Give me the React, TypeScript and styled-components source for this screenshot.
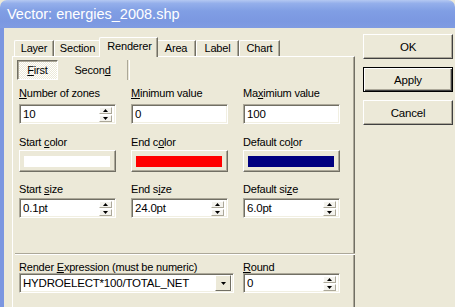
import React from "react";
import styled, { createGlobalStyle } from "styled-components";

const GlobalStyle = createGlobalStyle`
  html, body {
    margin: 0;
    padding: 0;
    width: 455px;
    height: 307px;
    overflow: hidden;
    background: #ece9d8;
  }
  body {
    font-family: "Liberation Sans", Arial, sans-serif;
    font-size: 11px;
    letter-spacing: -0.2px;
    color: #000;
  }
`;

const Window = styled.div`
  width: 455px;
  height: 307px;
  display: flex;
  flex-direction: column;
  overflow: hidden;
`;

const TitleBar = styled.div`
  height: 28px;
  flex: none;
  display: flex;
  align-items: center;
  padding-left: 7px;
  border-radius: 7px 7px 0 0;
  background: linear-gradient(
    180deg,
    #b4c8f2 0%,
    #94afeb 12%,
    #809ee4 40%,
    #7b98e1 75%,
    #7f9be2 100%
  );
  color: #fff;
  font-size: 14.5px;
  letter-spacing: 0;
`;

const Frame = styled.div`
  flex: 1;
  display: flex;
  align-items: flex-start;
  gap: 8px;
  padding: 6px 0 0 8px;
  border-left: 4px solid #7b96e0;
  overflow: hidden;
`;

const TabArea = styled.div`
  width: 343px;
  height: 300px;
  flex: none;
  display: flex;
  flex-direction: column;
  padding-top: 3px;
`;

const TabStrip = styled.div`
  height: 19px;
  display: flex;
  align-items: flex-end;
  padding-left: 2px;
`;

const Tab = styled.div<{ $w: number; $active?: boolean }>`
  width: ${(p) => p.$w}px;
  height: ${(p) => (p.$active ? 20 : 16)}px;
  margin: ${(p) => (p.$active ? "0 -2px -1px -2px" : "0")};
  padding-left: ${(p) => (p.$active ? 2 : 0)}px;
  box-sizing: border-box;
  position: relative;
  z-index: ${(p) => (p.$active ? 1 : 0)};
  display: flex;
  justify-content: center;
  align-items: ${(p) => (p.$active ? "flex-start" : "center")};
  padding-top: ${(p) => (p.$active ? 2 : 0)}px;
  background: #ece9d8;
  border-left: 1px solid #fff;
  border-top: 1px solid #fff;
  border-right: 1px solid #716f64;
  border-top-left-radius: 2px;
  box-shadow: inset -1px 0 #aca899;
  line-height: 13px;
`;

const Panel = styled.div`
  flex: 1;
  display: flex;
  flex-direction: column;
  border-left: 1px solid #fff;
  border-top: 1px solid #fff;
  border-right: 1px solid #716f64;
  box-shadow: inset -1px 0 #aca899;
  padding: 3px 0 0 4px;
`;

const SubTabs = styled.div`
  display: flex;
  height: 20px;
`;

const SubTab = styled.div<{ $w: number; $pressed?: boolean }>`
  width: ${(p) => p.$w}px;
  box-sizing: border-box;
  display: flex;
  align-items: center;
  justify-content: center;
  border: 1px solid;
  border-color: ${(p) =>
    p.$pressed ? "#716f64 #fff #fff #716f64" : "transparent"};
  box-shadow: ${(p) => (p.$pressed ? "inset 1px 1px #aca899" : "none")};
  background: ${(p) =>
    p.$pressed
      ? "repeating-conic-gradient(#fff 0 25%, #ece9d8 0 50%) 0 0 / 2px 2px"
      : "transparent"};
  margin-right: 4px;
`;

const VSep = styled.div`
  width: 1px;
  border-left: 1px solid #aca899;
  border-right: 1px solid #fff;
`;

const FieldRow = styled.div<{ $mt: number; $cols?: string; $gap?: number }>`
  display: grid;
  grid-template-columns: ${(p) => p.$cols || "97px 97px 97px"};
  column-gap: ${(p) => p.$gap ?? 15}px;
  margin-top: ${(p) => p.$mt}px;
  padding-left: 2px;
`;

const Field = styled.div<{ $gap: number }>`
  display: flex;
  flex-direction: column;
  gap: ${(p) => p.$gap}px;
`;

const Label = styled.div`
  height: 12px;
  line-height: 12px;
  white-space: nowrap;
`;

const Key = styled.span`
  text-decoration: underline;
`;

const Edit = styled.div`
  height: 20px;
  box-sizing: border-box;
  display: flex;
  align-items: center;
  background: #fff;
  border: 1px solid;
  border-color: #aca899 #fff #fff #aca899;
  box-shadow: inset 1px 1px #716f64, inset -1px -1px #f1efe2;
  padding: 0 2px 0 3px;
  font-size: 11.5px;
`;

const Value = styled.span`
  flex: 1;
  white-space: nowrap;
  overflow: hidden;
`;

const Spinner = styled.div`
  width: 13px;
  height: 15px;
  display: flex;
  flex-direction: column;
  gap: 1px;
  margin-right: 1px;
`;

const SpinBtn = styled.div`
  flex: 1;
  display: flex;
  align-items: center;
  justify-content: center;
  background: #f4f3ee;
  border: 1px solid;
  border-color: #fff #aca899 #aca899 #fff;
`;

const ColorButton = styled.div`
  height: 22px;
  box-sizing: border-box;
  display: flex;
  padding: 5px 5px 4px 4px;
  border: 1px solid;
  border-color: #fff #716f64 #716f64 #fff;
  box-shadow: inset -1px -1px #aca899;
  background: #ece9d8;
`;

const Swatch = styled.div<{ $color: string }>`
  flex: 1;
  background: ${(p) => p.$color};
`;

const HSep = styled.div`
  margin: 35px 0 0 -2px;
  width: 340px;
  height: 0;
  border-top: 1px solid #aca899;
  border-bottom: 1px solid #fff;
`;

const DropBtn = styled.div`
  width: 16px;
  height: 16px;
  box-sizing: border-box;
  display: flex;
  align-items: center;
  justify-content: center;
  background: #ece9d8;
  border: 1px solid;
  border-color: #fff #716f64 #716f64 #fff;
`;

const ButtonColumn = styled.div`
  width: 90px;
  flex: none;
  display: flex;
  flex-direction: column;
  gap: 8px;
`;

const PushButton = styled.div<{ $default?: boolean }>`
  height: 25px;
  box-sizing: border-box;
  display: flex;
  align-items: center;
  justify-content: center;
  background: #ece9d8;
  font-size: 11.5px;
  border: 1px solid;
  border-color: ${(p) => (p.$default ? "#000" : "#fff #404040 #404040 #fff")};
  box-shadow: ${(p) =>
    p.$default
      ? "inset 1px 1px #fff, inset -1px -1px #404040, inset -2px -2px #aca899"
      : "inset -1px -1px #aca899"};
`;

const Arrow = ({ up }: { up?: boolean }) => (
  <svg width="5" height="3" viewBox="0 0 5 3">
    <path d={up ? "M2.5 0 L5 3 L0 3 Z" : "M0 0 L5 0 L2.5 3 Z"} fill="#000" />
  </svg>
);

const SpinEdit = ({ value }: { value: string }) => (
  <Edit>
    <Value>{value}</Value>
    <Spinner>
      <SpinBtn>
        <Arrow up />
      </SpinBtn>
      <SpinBtn>
        <Arrow />
      </SpinBtn>
    </Spinner>
  </Edit>
);

const tabs = [
  { name: "Layer", w: 40 },
  { name: "Section", w: 47 },
  { name: "Renderer", w: 59, active: true },
  { name: "Area", w: 40 },
  { name: "Label", w: 43 },
  { name: "Chart", w: 41 },
];

export default function App() {
  return (
    <>
      <GlobalStyle />
      <Window>
        <TitleBar>Vector: energies_2008.shp</TitleBar>
        <Frame>
          <TabArea>
            <TabStrip>
              {tabs.map((t) => (
                <Tab key={t.name} $w={t.w} $active={t.active}>
                  {t.name}
                </Tab>
              ))}
            </TabStrip>
            <Panel>
              <SubTabs>
                <SubTab $w={41} $pressed>
                  <span>
                    <Key>F</Key>irst
                  </span>
                </SubTab>
                <SubTab $w={61}>
                  <span>
                    Secon<Key>d</Key>
                  </span>
                </SubTab>
                <VSep />
              </SubTabs>

              <FieldRow $mt={7}>
                <Field $gap={5}>
                  <Label>
                    <Key>N</Key>umber of zones
                  </Label>
                  <SpinEdit value="10" />
                </Field>
                <Field $gap={5}>
                  <Label>
                    <Key>M</Key>inimum value
                  </Label>
                  <Edit>
                    <Value>0</Value>
                  </Edit>
                </Field>
                <Field $gap={5}>
                  <Label>
                    Ma<Key>x</Key>imium value
                  </Label>
                  <Edit>
                    <Value>100</Value>
                  </Edit>
                </Field>
              </FieldRow>

              <FieldRow $mt={12}>
                <Field $gap={2}>
                  <Label>
                    Start <Key>c</Key>olor
                  </Label>
                  <ColorButton>
                    <Swatch $color="#ffffff" />
                  </ColorButton>
                </Field>
                <Field $gap={2}>
                  <Label>
                    End c<Key>o</Key>lor
                  </Label>
                  <ColorButton>
                    <Swatch $color="#ff0000" />
                  </ColorButton>
                </Field>
                <Field $gap={2}>
                  <Label>
                    Default co<Key>l</Key>or
                  </Label>
                  <ColorButton>
                    <Swatch $color="#000080" />
                  </ColorButton>
                </Field>
              </FieldRow>

              <FieldRow $mt={11}>
                <Field $gap={3}>
                  <Label>
                    Start <Key>s</Key>ize
                  </Label>
                  <SpinEdit value="0.1pt" />
                </Field>
                <Field $gap={3}>
                  <Label>
                    End s<Key>i</Key>ze
                  </Label>
                  <SpinEdit value="24.0pt" />
                </Field>
                <Field $gap={3}>
                  <Label>
                    Default si<Key>z</Key>e
                  </Label>
                  <SpinEdit value="6.0pt" />
                </Field>
              </FieldRow>

              <HSep />

              <FieldRow $mt={6} $cols="215px 97px" $gap={9}>
                <Field $gap={-2}>
                  <Label>
                    Render <Key>E</Key>xpression (must be numeric)
                  </Label>
                  <Edit>
                    <Value>HYDROELECT*100/TOTAL_NET</Value>
                    <DropBtn>
                      <Arrow />
                    </DropBtn>
                  </Edit>
                </Field>
                <Field $gap={-2}>
                  <Label>
                    <Key>R</Key>ound
                  </Label>
                  <SpinEdit value="0" />
                </Field>
              </FieldRow>
            </Panel>
          </TabArea>
          <ButtonColumn>
            <PushButton>OK</PushButton>
            <PushButton $default>Apply</PushButton>
            <PushButton>Cancel</PushButton>
          </ButtonColumn>
        </Frame>
      </Window>
    </>
  );
}
